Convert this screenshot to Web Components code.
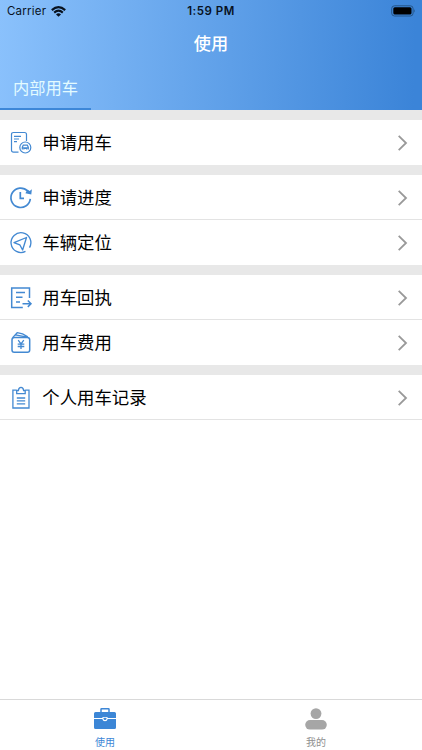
<!DOCTYPE html>
<html lang="zh-CN">
<head>
<meta charset="utf-8">
<title>使用</title>
<style>
html,body{margin:0;height:100%;background:#fff}
body{font-family:Inter,"Noto Sans CJK SC",sans-serif;overflow:hidden}
</style>
</head>
<body>
<car-app></car-app>
<script>
const define = (name, html) => customElements.define(name, class extends HTMLElement {
  constructor() {
    super();
    const t = document.createElement('template');
    t.innerHTML = html;
    this.attachShadow({mode: 'open'}).append(t.content.cloneNode(true));
  }
});

define('status-bar', `
<style>
:host{display:grid;grid-template-columns:1fr auto 1fr;align-items:center;height:22px;padding:0 7px 0 7px;box-sizing:border-box;color:#08121f;font-size:11.5px;line-height:22px}
.left{display:flex;align-items:center;gap:5px;letter-spacing:.22px}
.time{font-weight:600;font-size:11.5px;letter-spacing:.5px}
.right{display:flex;justify-content:flex-end}
svg{display:block}
</style>
<div class="left"><span>Carrier</span>
<svg width="15" height="11" viewBox="0 0 15 11" fill="none" stroke="#08121f"><path d="M.8 4.1Q7.500-1.900 14.200 4.100M3.200 6.600Q7.500 2.800 11.800 6.600" stroke-width="2.100"/><path d="M7.500 10.800L5 8.400Q7.500 6.300 10 8.400Z" fill="#08121f" stroke="none"/></svg></div>
<span class="time">1:59 PM</span>
<div class="right"><svg width="24" height="12" viewBox="0 0 24 12"><rect x=".7" y=".8" width="21.400" height="10.200" rx="2.800" fill="none" stroke="#245588"/><rect x="2.300" y="2.300" width="18.200" height="7.200" rx="1.500" fill="#000"/><path d="M23 4.300q1.400 1.600 0 3.200z" fill="#245588"/></svg></div>`);

define('page-header', `
<style>
:host{display:flex;flex-direction:column;height:110px;background:linear-gradient(92deg,#8ac1fc 0%,#3b84d8 98%)}
.title{height:44px;line-height:44px;text-align:center;color:#fff;font-size:17.200px;font-weight:500}
.tab{width:91px;height:44px;box-sizing:border-box;border-bottom:2px solid #3d87d8;color:#e3fbff;font-size:16.300px;line-height:45px;text-align:center}
</style>
<status-bar></status-bar>
<div class="title"><slot name="title"></slot></div>
<div class="tab"><slot name="tab"></slot></div>`);

define('menu-group', `
<style>:host{display:block;border-top:10px solid #e8e8e8}</style><slot></slot>`);

define('menu-row', `
<style>
:host{display:flex;align-items:center;height:45px;padding:2px 14px 0 9px;box-sizing:border-box;color:#000;font-size:17.400px;line-height:42px;border-bottom:1px solid #e3e3e3}
:host([plain]){border-bottom-color:transparent}
.label{flex:1;padding-left:9.300px}
svg{display:block}
</style>
<slot name="icon"></slot><span class="label"><slot></slot></span>
<svg width="11" height="18" viewBox="0 0 11 18" fill="none" stroke="#999" stroke-width="1.800"><path d="M1.700 1.800L9 9L1.700 16.200"/></svg>`);

const icons = {
  request: '<g stroke-width="1.200"><path d="M9.500 21.200H4.500Q2.500 21.200 2.500 19.200V3.500Q2.500 1.500 4.500 1.500H15.500Q17.500 1.500 17.500 3.500V10M5 5.300h7M5 8h5M5 10.700h3"/><circle cx="16.300" cy="16.500" r="5.500"/><path d="M13.300 18.500v-2.300l1-2h4l1 2v2.300M13.300 16.800h6M14.500 18.300l1-1h1.600l1 1"/></g>',
  progress: '<path d="M18.600 5A9.700 9.700 0 1 0 21.300 12.800M11.300 6V12.400H15" stroke-width="1.700"/><path d="M16.400 7.200L22.300 8.600L22.900 3.200L20.700 5L18.500 3.600Z" fill="#4389d2" stroke="none"/>',
  locate: '<path d="M16.500 20.400A9.900 9.900 0 1 1 20.500 16.600M17.500 6.500L5 11.600L10.800 13.800L13.600 19Z" stroke-width="1.350" stroke-linejoin="round"/>',
  receipt: '<path d="M13.800 21.500H2.700V1.900H20.500V12M7 6.600h9M7 11.300h6.500M7 16h4M13.500 17.700H22M18.800 14.500L22 17.700L18.800 20.900" stroke-width="1.500"/>',
  cost: '<g transform="translate(0 -.6)"><rect x="3" y="7" width="17.700" height="14.800" rx="2.300" stroke-width="1.500"/><path d="M3.600 7.200L8.200 2.300Q13.600 2.800 18.800 6.500M6.500 4.500L18 6.700M9.200 9.700l2.800 3.800l2.800-3.800M12 13.500v5.200M8.700 13.700h6.600M8.700 16.100h6.600" stroke-width="1.300"/></g>',
  record: '<path d="M7.700 4.200H3.900V22H20V4.200H16.200M7.700 7.700V4.500H9.400Q9.700 1.400 12 1.400T14.600 4.500H16.200V7.700ZM7.800 12h8.400M7.800 14.900h8.400M7.800 17.800h8.400" stroke-width="1.300"/>'
};
customElements.define('line-icon', class extends HTMLElement {
  constructor() {
    super();
    this.attachShadow({mode: 'open'});
  }
  connectedCallback() {
    this.shadowRoot.innerHTML = `<style>:host{display:block;width:24px;height:24px}svg{display:block}</style><svg width="24" height="24" viewBox="0 0 24 24" fill="none" stroke="#4389d2">${icons[this.getAttribute('name')]}</svg>`;
  }
});

define('tab-item', `
<style>
:host{flex:1;display:flex;flex-direction:column;align-items:center;color:#8f8f8f;font-size:10px;line-height:14px;padding:7px 1px 0 0}
:host([active]){color:#3c86d6}
span{margin-top:4px}
</style>
<slot name="icon"></slot><span><slot></slot></span>`);

define('tab-bar', `
<style>:host{display:flex;height:51px;box-sizing:border-box;border-top:1px solid #d9d9d9;background:#fff}</style><slot></slot>`);

define('car-app', `
<style>
:host{display:flex;flex-direction:column;height:750px;background:#fff}
main{flex:1}
svg{display:block}
</style>
<page-header><span slot="title">使用</span><span slot="tab">内部用车</span></page-header>
<main>
<menu-group><menu-row plain><line-icon slot="icon" name="request"></line-icon>申请用车</menu-row></menu-group>
<menu-group><menu-row><line-icon slot="icon" name="progress"></line-icon>申请进度</menu-row><menu-row plain><line-icon slot="icon" name="locate"></line-icon>车辆定位</menu-row></menu-group>
<menu-group><menu-row><line-icon slot="icon" name="receipt"></line-icon>用车回执</menu-row><menu-row plain><line-icon slot="icon" name="cost"></line-icon>用车费用</menu-row></menu-group>
<menu-group><menu-row><line-icon slot="icon" name="record"></line-icon>个人用车记录</menu-row></menu-group>
</main>
<tab-bar>
<tab-item active><svg slot="icon" width="24" height="24" viewBox="0 0 24 24"><path d="M8 6V2.300Q8 1.800 8.500 1.800H15.500Q16 1.800 16 2.300V6" fill="none" stroke="#3c86d6" stroke-width="1.500"/><path d="M2.500 5H21.500Q23 5 23 6.500V11H14.500V10H9.500V11H1V6.500Q1 5 2.500 5ZM1 12H9.300Q9.800 14.300 12 14.300T14.700 12H23V20.500Q23 22 21.500 22H2.500Q1 22 1 20.500Z" fill="#3c86d6"/><path d="M10.500 10.800h3v1q-.3 1.200-1.500 1.200t-1.500-1.200z" fill="#3c86d6"/></svg>使用</tab-item>
<tab-item><svg slot="icon" width="24" height="24" viewBox="0 0 24 24" fill="#a6a6a6"><circle cx="12" cy="6.600" r="5.400"/><rect x="1.200" y="13" width="21.600" height="9.600" rx="4.800"/></svg>我的</tab-item>
</tab-bar>`);
</script>
</body>
</html>
